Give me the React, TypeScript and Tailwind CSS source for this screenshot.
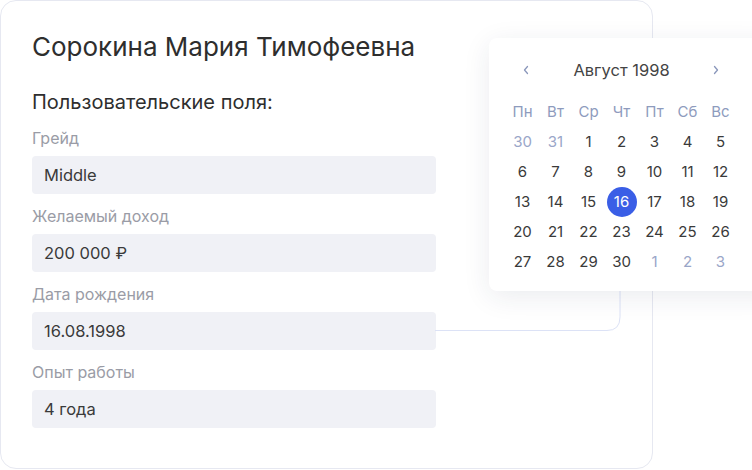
import React from "react";

const fields = [
  { label: "Грейд", value: "Middle" },
  { label: "Желаемый доход", value: "200 000 ₽" },
  { label: "Дата рождения", value: "16.08.1998" },
  { label: "Опыт работы", value: "4 года" },
];

const dayNames = ["Пн", "Вт", "Ср", "Чт", "Пт", "Сб", "Вс"];

const days: { d: number; muted?: boolean }[] = [
  { d: 30, muted: true }, { d: 31, muted: true },
  ...Array.from({ length: 30 }, (_, i) => ({ d: i + 1 })),
  { d: 1, muted: true }, { d: 2, muted: true }, { d: 3, muted: true },
];

export default function App() {
  return (
    <div className="relative w-[752px] h-[470px] overflow-hidden bg-white" style={{ fontFamily: "Inter, 'Noto Sans', sans-serif" }}>
      <div className="relative w-[653px] h-[469px] border border-[#e6e8f1] rounded-[16px] pl-[31px] pt-[30px]">
        <h1 className="text-[26px] leading-[32px] text-[#2e2e2e]">Сорокина Мария Тимофеевна</h1>
        <h2 className="mt-[26px] text-[20px] leading-[26px] text-[#2e2e2e]">Пользовательские поля:</h2>
        <div className="mt-[13px] flex flex-col">
          {fields.map((f) => (
            <div key={f.label} className="flex flex-col mb-[12px]">
              <div className="h-[20px] leading-[20px] text-[16px] text-[#9a9ca6]">{f.label}</div>
              <div className="mt-[8px] w-[404px] h-[38px] rounded-[4px] bg-[#f0f1f6] px-[12px] flex items-center text-[16.5px] text-[#3a3a3a]">
                {f.value}
              </div>
            </div>
          ))}
        </div>
        <svg className="absolute left-0 top-0 pointer-events-none" width="653" height="469">
          <path d="M434 329.5 H606 Q619 329.5 619 316 V280" fill="none" stroke="#dce2f6" strokeWidth="1" />
        </svg>
      </div>

      <div className="absolute left-[489px] top-[38px] w-[290px] h-[253px] bg-white rounded-[8px] shadow-[0_6px_28px_rgba(30,40,80,0.09)] pl-[17px] pt-[20px]">
        <div className="grid grid-cols-[repeat(7,33px)] h-[22px] items-center">
          <div className="flex justify-center pl-[6px] text-[#8a97bb]">
            <svg width="10" height="10" viewBox="0 0 10 10"><path d="M6.5 1.5 L3.5 5 L6.5 8.5" fill="none" stroke="currentColor" strokeWidth="1.3" strokeLinecap="round" strokeLinejoin="round" /></svg>
          </div>
          <div className="col-span-5 text-center text-[16.5px] text-[#444]">Август 1998</div>
          <div className="flex justify-center pr-[10px] text-[#8a97bb]">
            <svg width="10" height="10" viewBox="0 0 10 10"><path d="M3.5 1.5 L6.5 5 L3.5 8.5" fill="none" stroke="currentColor" strokeWidth="1.3" strokeLinecap="round" strokeLinejoin="round" /></svg>
          </div>
        </div>
        <div className="mt-[19px] grid grid-cols-[repeat(7,33px)] text-[15px]">
          {dayNames.map((n) => (
            <div key={n} className="h-[26px] flex items-center justify-center text-[#8e9bbd]">{n}</div>
          ))}
        </div>
        <div className="mt-[2px] grid grid-cols-[repeat(7,33px)] text-[15px]">
          {days.map((x, i) => (
            <div key={i} className="h-[30px] flex items-center justify-center">
              {x.d === 16 && !x.muted ? (
                <span className="w-[30px] h-[30px] rounded-full bg-[#3a5ee6] text-white flex items-center justify-center">16</span>
              ) : (
                <span className={x.muted ? "text-[#9aa6c8]" : "text-[#3a3a3a]"}>{x.d}</span>
              )}
            </div>
          ))}
        </div>
      </div>
    </div>
  );
}
